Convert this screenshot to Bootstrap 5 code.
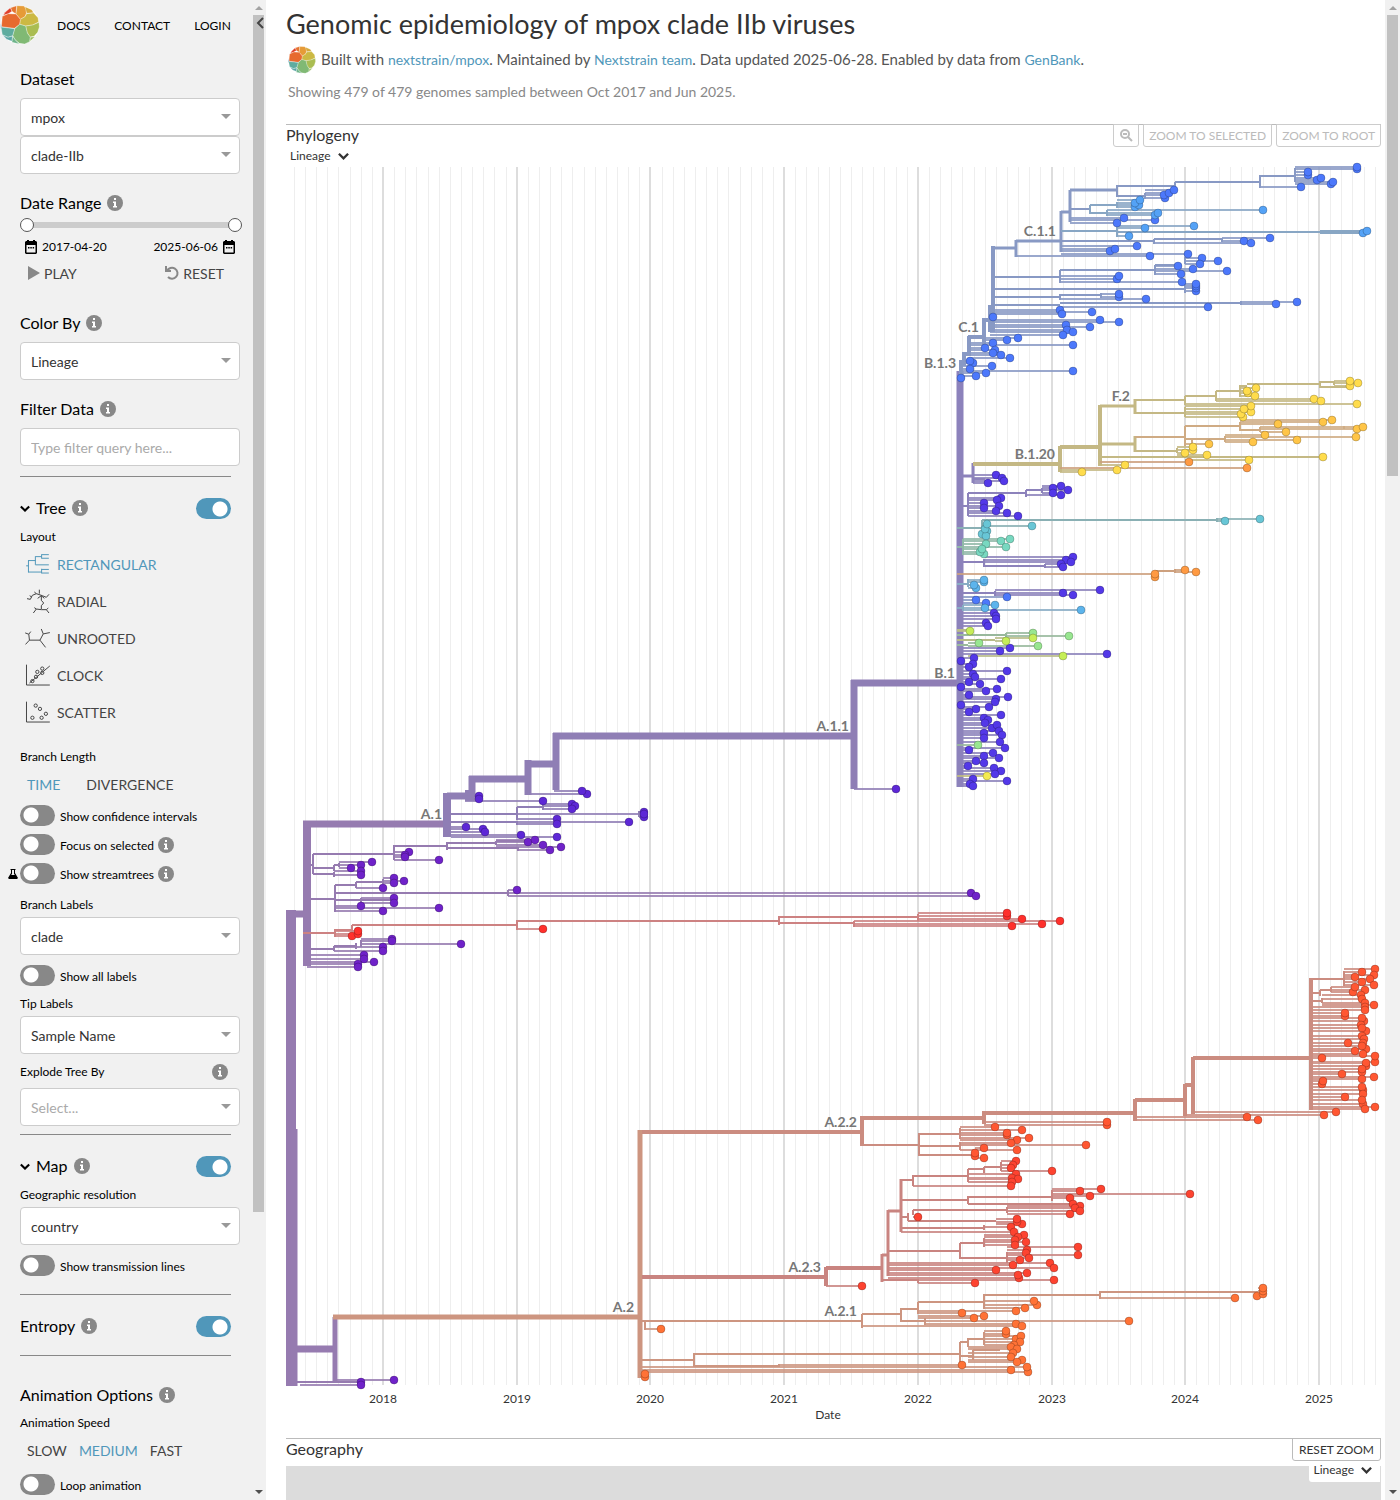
<!DOCTYPE html>
<html lang="en">
  <head>
    <meta charset="utf-8">
    <meta name="viewport" content="width=device-width, initial-scale=1">
    <title>Genomic epidemiology of mpox clade IIb viruses</title>
    <link href="https://cdn.jsdelivr.net/npm/bootstrap@5.3.3/dist/css/bootstrap.min.css" rel="stylesheet">
    <style>
      body { font-family: Lato, "Liberation Sans", sans-serif; font-size: 14px; color: #333; height: 100vh; overflow: hidden; }
      a { color: #5097ba; text-decoration: none; }
      button { background: none; border: 0; padding: 0; color: #444; }
      .side { width: 266px; background: #f1f1f1; color: #000; }
      .side-body { width: 253px; padding-left: 20px; overflow: hidden; }
      .side-body > * { width: 220px; }
      .side-body .side-nav { height: 50px; margin-left: -20px; width: 253px; font-size: 12px; gap: 24px; }
      .side-nav a { color: #000; padding-top: 2px; }
      .side-nav a:first-child { padding-top: 0; margin-right: -7px; }
      .sec { font-size: 16px; line-height: 24px; margin: 17px 0 7px; gap: 6px; }
      .sec-toggle { margin: 19px 0 0; }
      .sec-toggle .sw { margin: 0 9px 0 auto; }
      .sec-anim { margin-top: 27px; }
      .side .line { width: 211px; height: 1px; margin-top: 8px; background: #888; }
      .side .line-filter { margin-top: 10px; }
      .side .line-sw { margin-top: 14px; }
      .side .line-sec { margin-top: 17px; }
      .lbl { font-size: 12px; line-height: 18px; margin: 5px 0 3px; display: block; }
      .lbl-far { margin-top: 17px; }
      .lbl-info { margin: 9px 0 7px; padding-right: 12px; }
      .pick, .pick:focus { height: 38px; font-size: 14px; color: #333; border: 1px solid #ccc; border-radius: 4px; padding: 0 10px; background-color: #fff; box-shadow: none; }
      select.pick { background-image: url("data:image/svg+xml,%3csvg xmlns='http://www.w3.org/2000/svg' viewBox='0 0 10 5'%3e%3cpath fill='%23999' d='M0 0h10L5 5z'/%3e%3c/svg%3e"); background-size: 10px 5px; background-position: right 8px top 15px; }
      .pick::placeholder, .pick.empty { color: #aaa; }
      .info { width: 16px; height: 16px; flex: none; }
      .sw-row { height: 29px; font-size: 12px; }
      .sw-row label { margin: 2px 4px 0 5px; }
      .pick + .sw-row { margin-top: 6px; }
      .sw { appearance: none; flex: none; width: 35px; height: 21px; margin: 0; border-radius: 11px; background: radial-gradient(circle at 11px 10px, #fff 7px, #888 8px); }
      .sw:checked { background: radial-gradient(circle at 24px 11px, #fff 7px, #5097ba 8px); }
      .flask { position: absolute; left: -12px; }
      .ranges { display: grid; height: 20px; }
      .side-body .ranges { width: 222px; }
      .ranges input { grid-area: 1 / 1; appearance: none; background: none; width: 222px; height: 20px; margin: 0; pointer-events: none; }
      .ranges input:first-child { background: linear-gradient(#ccc, #ccc) center / 208px 6px no-repeat; }
      .ranges input::-webkit-slider-thumb { appearance: none; width: 14px; height: 14px; border: 1px solid #555; border-radius: 50%; background: #fff; pointer-events: auto; }
      .dates { height: 20px; margin-top: 2px; font-size: 12px; padding: 0 4px; }
      .dates button { color: #000; }
      .anim { height: 32px; margin-bottom: 22px; padding: 0 16px 0 7px; }
      .lay { height: 37px; padding-left: 5px; gap: 7px; }
      .lay svg { fill: none; stroke: currentColor; stroke-width: 3; }
      .opts { height: 24px; margin: 6px 0 5px; padding-left: 7px; gap: 26px; }
      .opts-tight { gap: 12px; }
      .on { color: #5097ba; }
      .bar { background: #f1f1f1; flex: none; }
      .bar div { background: #c1c1c1; width: 11px; }
      .bar-page { width: 15px; }
      .fold { position: absolute; left: 256px; top: 17px; line-height: 0; }
      .main { padding: 5px 4px 0 20px; overflow: hidden; min-width: 0; }
      h1 { font-size: 27px; line-height: 38px; margin: 0 0 2px; font-weight: 400; }
      .byline { height: 30px; font-size: 15px; color: #555; gap: 5px; padding-left: 2px; }
      .byline span { padding-bottom: 2px; }
      .byline a { font-size: 14px; }
      .note { line-height: 20px; margin: 7px 0 22px 2px; color: #888; }
      .pane { border-top: 1px solid #bbb; font-size: 16px; height: 23px; }
      .pane h2 { font-size: 16px; line-height: 19px; margin: 0; font-weight: 400; }
      .pane button { font-size: 12px; height: 23px; margin-top: -1px; border: 1px solid #bbb; border-radius: 0 0 3px 3px; padding: 0 6px; color: #333; }
      .pane button:disabled { color: #bbb; border-color: #ccc; padding: 0 5px; }
      .legend-btn { font-size: 12px; line-height: 18px; color: #333; padding: 0 4px; display: flex; gap: 7px; align-items: center; }
      .tree { display: block; width: 100%; overflow: visible; }
      .tree text { font-size: 12px; fill: #333; text-anchor: middle; }
      .tree .clade { font-size: 14px; font-weight: 700; fill: #777; text-anchor: end; }
      .map { height: 60px; margin-top: 5px; background: #dcdcdc; position: relative; }
      .map .legend-btn { position: absolute; right: 1px; top: 0; height: 16px; line-height: 8px; padding: 0 8px 8px 4px; background: #fff; border-radius: 0 0 0 3px; }
    </style>
  </head>
  <body class="d-flex">
    <svg width="0" height="0" class="position-absolute">
      <symbol id="logo" viewBox="0 0 120 120">
        <circle cx="60" cy="60" r="58" fill="#fff"/>
        <g stroke="#fff" stroke-width="1">
          <path fill="#e0402b" d="M15 22L31 8 36 19 25 26 10 31z"/>
          <path fill="#e5742f" d="M32 8L50 2 48 27 36 19z"/>
          <path fill="#e69b37" d="M51 2L72 3 79 12 79 25 75 35 61 43 48 27z"/>
          <path fill="#d5a83c" d="M75 5L95 14 101 23 80 25z"/>
          <path fill="#ccb943" d="M80 26L101 24 114 38 116 51 98 60 77 63 59 58 61 43 75 35z"/>
          <path fill="#e76a2f" d="M7 34L25 26 48 27 61 43 59 58 44 70 26 68 4 65z"/>
          <path fill="#4a8cb8" d="M2 54L5 66 2 72z"/>
          <path fill="#aabd52" d="M98 60L117 52 118 66 113 82 102 94 90 96 81 82 77 63z"/>
          <path fill="#80b974" d="M59 58L77 63 82 84 91 97 89 110 74 117 58 115 46 105 38 92 44 71z"/>
          <path fill="#5fac9f" d="M3 66L26 69 44 71 38 92 24 97 7 89z"/>
          <path fill="#5ba5a5" d="M8 90L24 97 38 93 36 109 20 103z"/>
          <path fill="#6db38a" d="M38 93L46 105 58 117 36 112z"/>
          <path fill="#98bc5e" d="M91 97L105 95 90 109z"/>
        </g>
      </symbol>
      <symbol id="info" viewBox="0 0 16 16">
        <circle cx="8" cy="8" r="8" fill="#888"/>
        <path fill="#fff" d="M7 3h2v2H7zM6 6.500h3V11h1v1.500H6V11h1V8H6z"/>
      </symbol>
      <symbol id="cal" viewBox="0 0 12 14">
        <path fill="currentColor" fill-rule="evenodd" d="M2 0h2v1h4V0h2v1h1l1 1v11l-1 1H1l-1-1V2l1-1h1zM1.500 5v7.500h9V5zM3 7h1.500v1.500H3zM5.300 7h1.500v1.500H5.300zM7.600 7h1.500v1.500H7.600z"/>
      </symbol>
      <symbol id="chev" viewBox="0 0 12 8">
        <path fill="none" stroke="currentColor" stroke-width="2.500" d="M1 1.500L6 6.500 11 1.500"/>
      </symbol>
    </svg>

    <aside class="side d-flex flex-shrink-0 position-relative">
      <div class="side-body">
        <nav class="side-nav d-flex align-items-center">
          <a href="#" aria-label="Home"><svg width="40" height="40"><use href="#logo"/></svg></a>
          <a href="#">DOCS</a>
          <a href="#">CONTACT</a>
          <a href="#">LOGIN</a>
        </nav>

        <label class="sec d-block" for="dataset">Dataset</label>
        <select id="dataset" class="form-select pick"><option>mpox</option></select>
        <select class="form-select pick" aria-label="Clade"><option>clade-IIb</option></select>

        <div class="sec d-flex align-items-center mb-0">Date Range <svg class="info"><use href="#info"/></svg></div>
        <div class="ranges">
          <input type="range" min="0" max="100" value="0" aria-label="Start date">
          <input type="range" min="0" max="100" value="100" aria-label="End date">
        </div>
        <div class="dates d-flex justify-content-between">
          <button type="button" class="d-flex align-items-center gap-1"><svg width="14" height="14"><use href="#cal"/></svg>2017-04-20</button>
          <button type="button" class="d-flex align-items-center gap-1">2025-06-06<svg width="14" height="14"><use href="#cal"/></svg></button>
        </div>
        <div class="anim d-flex justify-content-between">
          <button type="button" class="d-flex align-items-center gap-1"><svg width="13" height="14"><path fill="#888" d="M1 0l12 7L1 14z"/></svg>PLAY</button>
          <button type="button" class="d-flex align-items-center gap-1"><svg width="14" height="14" fill="none" stroke="#888" stroke-width="2"><path d="M1 0v5h5M2 5A5.500 5.500 0 1 1 3 11"/></svg>RESET</button>
        </div>

        <label class="sec d-flex align-items-center" for="colorby">Color By <svg class="info"><use href="#info"/></svg></label>
        <select id="colorby" class="form-select pick"><option>Lineage</option></select>
        <label class="sec d-flex align-items-center" for="filter">Filter Data <svg class="info"><use href="#info"/></svg></label>
        <input id="filter" class="form-control pick" placeholder="Type filter query here...">
        <div class="line line-filter"></div>

        <div class="sec sec-toggle d-flex align-items-center">
          <svg width="10" height="7"><use href="#chev"/></svg>
          <label for="tree-on">Tree</label> <svg class="info"><use href="#info"/></svg>
          <input id="tree-on" type="checkbox" role="switch" class="sw" checked>
        </div>
        <div class="lbl mt-2 mb-0">Layout</div>
        <button type="button" class="lay on d-flex align-items-center"><svg width="25" height="23" viewBox="0 0 75 70"><path d="M3 39H10M10 22V59M9 23H32M31 10V36M31 11H50M50 4V17M50 5H72M50 16H72M31 36H72M9 58H50M50 48V62M50 50H72M50 61H72"/></svg>RECTANGULAR</button>
        <button type="button" class="lay d-flex align-items-center"><svg width="25" height="25" viewBox="0 0 75 75"><path d="M6 29L16 31 22 19 34 14 52 20 64 25 72 16M43 14V2M20 24L14 20M34 14L28 9M49 20V34L56 42 49 50V60M38 28L49 20 58 28M25 72L34 60 49 62 64 62 72 72M34 60L28 56M64 62L70 57"/></svg>RADIAL</button>
        <button type="button" class="lay d-flex align-items-center"><svg width="25" height="23" viewBox="0 0 75 70"><path d="M13 40H45M13 40L1 53M13 40L11 22 0 18M11 22L17 14M45 40L62 62M45 40L55 21 49 6M55 21L75 17"/></svg>UNROOTED</button>
        <button type="button" class="lay d-flex align-items-center"><svg width="25" height="23" viewBox="0 0 75 70"><path d="M4 2V64H75M13 58L75 6"/><circle cx="22" cy="52" r="5"/><circle cx="33" cy="39" r="5"/><circle cx="37" cy="24" r="5"/><circle cx="52" cy="14" r="5"/><circle cx="52" cy="27" r="5"/></svg>CLOCK</button>
        <button type="button" class="lay d-flex align-items-center"><svg width="25" height="23" viewBox="0 0 75 70"><path d="M4 2V64H75"/><circle cx="32" cy="14" r="5"/><circle cx="45" cy="24" r="5"/><circle cx="63" cy="39" r="5"/><circle cx="22" cy="51" r="5"/><circle cx="50" cy="51" r="5"/></svg>SCATTER</button>

        <div class="lbl lbl-far">Branch Length</div>
        <div class="opts d-flex"><button type="button" class="on">TIME</button><button type="button">DIVERGENCE</button></div>
        <div class="sw-row d-flex align-items-center"><input id="s1" type="checkbox" role="switch" class="sw"><label for="s1">Show confidence intervals</label></div>
        <div class="sw-row d-flex align-items-center"><input id="s2" type="checkbox" role="switch" class="sw"><label for="s2">Focus on selected</label><svg class="info"><use href="#info"/></svg></div>
        <div class="sw-row d-flex align-items-center position-relative">
          <svg class="flask" width="10" height="10"><path d="M2.500 0h5v1H7v3l3 5-1 1H1L0 9l3-5V1h-.5zM4 1v4L3 6h4L6 5V1z" fill-rule="evenodd"/></svg>
          <input id="s3" type="checkbox" role="switch" class="sw"><label for="s3">Show streamtrees</label><svg class="info"><use href="#info"/></svg>
        </div>
        <label class="lbl mt-2" for="blabels">Branch Labels</label>
        <select id="blabels" class="form-select pick"><option>clade</option></select>
        <div class="sw-row d-flex align-items-center"><input id="s4" type="checkbox" role="switch" class="sw"><label for="s4">Show all labels</label></div>
        <label class="lbl" for="tlabels">Tip Labels</label>
        <select id="tlabels" class="form-select pick"><option>Sample Name</option></select>
        <label class="lbl lbl-info d-flex align-items-center justify-content-between" for="explode">Explode Tree By <svg class="info"><use href="#info"/></svg></label>
        <select id="explode" class="form-select pick empty"><option>Select...</option></select>
        <div class="line"></div>

        <div class="sec sec-toggle d-flex align-items-center">
          <svg width="10" height="7"><use href="#chev"/></svg>
          <label for="map-on">Map</label> <svg class="info"><use href="#info"/></svg>
          <input id="map-on" type="checkbox" role="switch" class="sw" checked>
        </div>
        <label class="lbl mt-2" for="geo">Geographic resolution</label>
        <select id="geo" class="form-select pick"><option>country</option></select>
        <div class="sw-row d-flex align-items-center"><input id="s5" type="checkbox" role="switch" class="sw"><label for="s5">Show transmission lines</label></div>
        <div class="line line-sw"></div>

        <div class="sec sec-toggle d-flex align-items-center">
          <label for="ent-on">Entropy</label> <svg class="info"><use href="#info"/></svg>
          <input id="ent-on" type="checkbox" role="switch" class="sw" checked>
        </div>
        <div class="line line-sec"></div>
        <div class="sec sec-anim d-flex align-items-center">Animation Options <svg class="info"><use href="#info"/></svg></div>
        <div class="lbl">Animation Speed</div>
        <div class="opts opts-tight d-flex"><button type="button">SLOW</button><button type="button" class="on">MEDIUM</button><button type="button">FAST</button></div>
        <div class="sw-row d-flex align-items-center mt-2"><input id="s6" type="checkbox" role="switch" class="sw"><label for="s6">Loop animation</label></div>
      </div>
      <div class="bar d-flex flex-column">
        <svg width="11" height="15"><path fill="#a3a3a3" d="M2 10L6 6l4 4z"/></svg>
        <div style="height: 1197px"></div>
        <svg class="mt-auto" width="11" height="15"><path fill="#505050" d="M2 5h8L6 9z"/></svg>
      </div>
      <button type="button" class="fold" aria-label="Hide sidebar"><svg width="8" height="12" fill="none" stroke="#444" stroke-width="2"><path d="M7 1L2 6l5 5"/></svg></button>
    </aside>

    <main class="main flex-grow-1">
      <h1>Genomic epidemiology of mpox clade IIb viruses</h1>
      <div class="byline d-flex align-items-center">
        <svg width="28" height="28"><use href="#logo"/></svg>
        <span>Built with <a href="#">nextstrain/mpox</a>. Maintained by <a href="#">Nextstrain team</a>. Data updated 2025-06-28. Enabled by data from <a href="#">GenBank</a>.</span>
      </div>
      <p class="note">Showing 479 of 479 genomes sampled between Oct 2017 and Jun 2025.</p>

      <section>
        <div class="pane d-flex gap-1">
          <h2 class="me-auto">Phylogeny</h2>
          <button type="button" disabled aria-label="Zoom out"><svg width="14" height="14" fill="none" stroke="#bbb" stroke-width="2"><circle cx="6" cy="5" r="4"/><path d="M9 8l4 4M4 5h4"/></svg></button>
          <button type="button" disabled>ZOOM TO SELECTED</button>
          <button type="button" disabled>ZOOM TO ROOT</button>
        </div>
        <button type="button" class="legend-btn">Lineage <svg width="11" height="8"><use href="#chev"/></svg></button>
        <svg id="tree" class="tree" viewBox="286 165 1095 1273"></svg>
      </section>

      <section>
        <div class="pane d-flex">
          <h2 class="me-auto">Geography</h2>
          <button type="button">RESET ZOOM</button>
        </div>
        <div class="map"><button type="button" class="legend-btn">Lineage <svg width="11" height="8"><use href="#chev"/></svg></button></div>
      </section>
    </main>
    <div class="bar bar-page d-flex flex-column align-items-center">
      <svg width="11" height="15"><path fill="#a3a3a3" d="M2 10L6 6l4 4z"/></svg>
      <div style="height: 461px"></div>
      <svg class="mt-auto" width="11" height="15"><path fill="#505050" d="M2 5h8L6 9z"/></svg>
    </div>

    <script>
      // line: branch colour, tip: tip colour
      // paths: [width, d], fans: [start x, "x,y ..."], each tip gets a branch from start x
      const lineages = [
        { line: "#967bb0", tip: "#6f22c9",
          paths: [
            [10, "M291 910V1386"], [8, "M307 821V966"], [7, "M287 914H307M303 824H447M291 1349H335M294 1129V1386"], [5, "M335 1317V1382"],
            [2, "M313 865H307M313 854V874M313 854H394M394 845V860M394 846H447M447 842V850M447 843H496M496 841V845M496 841H535M447 848H518M518 847V851M313 868H334M334 865V871M334 865H339M339 863V867M313 874H334M334 872V877M307 899H335M335 885V912M335 885H356M356 882V888M356 882H383M383 879V884M335 893H508M508 890V896M335 900H394M361 898V903M307 949H334M334 946V951M334 946H356M356 943V949M361 940V947M296 1382H361"]
          ],
          fans: [
            [496, "528,842 535,840 543,845 561,847"], [518, "550,850"], [394, "409,852 405,855 405,857 439,860"],
            [339, "351,868 372,862 361,865"], [334, "361,871 361,875"], [383, "394,878 404,881 394,883"], [356, "383,888"],
            [508, "517,890 971,893 976,896"], [361, "394,898 394,903"], [335, "361,906 439,908 383,911 394,1380"],
            [361, "392,939 392,941 461,944"], [334, "383,947 383,951"], [307, "364,955 364,959 374,962 358,964 358,967"], [300, "361,1382 361,1385"]
          ] },
        { line: "#8f7eb5", tip: "#5d27d6",
          paths: [
            [8, "M447 793V837M469 790V801"],
            [7, "M447 796H469M472 776V801M469 779H528M528 760V795M525 764H557M556 733V790M553 736H854M854 680V789M851 683H960"],
            [2, "M451 814H517M517 807V820M517 807H543M543 804V810M451 822H517M517 821V825M639 811V817"]
          ],
          fans: [
            [465, "479,796 479,799 543,801"], [531, "587,794"], [554, "582,791"], [543, "572,804 575,806 572,809"],
            [639, "644,812 644,817"], [517, "644,814 557,819 557,824 629,822"], [451, "466,827 483,829 485,832 521,835 557,837"], [854, "896,789"]
          ] },
        { line: "#cd8282", tip: "#ff302c",
          paths: [[2, "M303 933H335M335 929V937M335 930H352M352 925V931M352 925H517M517 920V930M517 921H779M779 916V925M779 917H918M918 914V921M779 923H854M854 921V927"]],
          fans: [[335, "352,936 358,934 358,931"], [517, "543,929"], [918, "1007,916 1007,913 1022,919"], [854, "1060,921 1042,924 1012,926"]] },
        { line: "#8c82bb", tip: "#5338e8",
          paths: [[7, "M960 371V787"], [3, "M960 476H973M973 463V483"], [2, "M973 479H985M968 506H960M968 493V516M968 493H1026M1026 490V497M1026 490H1042M1042 488V493M984 559V567M960 562H984M984 566H1045M1045 564V568M960 593H995M995 591V596"]],
          fans: [
            [973, "996,475 1002,478 1004,481 988,483"], [1042, "1053,488 1061,486 1068,490 1053,493"], [1026, "1061,495"],
            [968, "1001,498 997,500 984,503 984,508 999,506 996,511 1007,513 1018,516"], [984, "1066,560 1073,557 1071,562"], [1045, "1061,564 1063,567"],
            [995, "1100,590 1063,593 1073,595"], [963, "994,613 996,616 996,619 986,623 988,626 1010,648 1000,651 1107,654"],
            [960, "961,661 974,658 973,664 969,667 973,674 975,677 1007,671 1001,679 969,682 980,684 961,687 986,691 997,689 969,695 1008,697 996,699 995,702 961,705 989,707 976,709 969,712 1001,715 984,718 988,720 985,723 992,728 997,725 999,731 1002,735 984,733 984,738 1000,742 1005,748 969,750 993,753 984,756 999,758 976,761 984,763 968,766 994,768 1001,771 995,774 973,779 970,784 973,786 1007,781"]
          ] },
        { line: "#8899c4", tip: "#4c78fb",
          paths: [
            [4, "M961 378V360M964 366V352M963 354H969M969 336V356M968 337H984M984 318V345M983 320H990M990 305V332M993 246V332"],
            [3, "M993 248H1016M1016 240V257M1016 241H1061M1061 211V252M1061 212H1070M1070 190V222M1070 190H1117"],
            [2, "M1117 185V197M1117 186H1175M1175 182V187M1175 182H1260M1260 175V188M1260 176H1295M1295 168V182M1117 196H1145M1145 193V199M1070 209H1090M1061 241H1154M1154 239V244M1154 239H1222M1222 238V242M993 277H1060M1060 270V283M1060 270H1155M1155 265V275M1155 265H1178M1185 257V264M993 289H1185M1185 285V293M993 297H1060M1060 294V300M1060 295H1101M1101 293V298M993 305H1060M1060 303H1241M1241 301V305"]
          ],
          fans: [
            [1295, "1357,169 1357,167 1308,175 1308,172 1317,180 1321,178 1331,184 1333,182"], [1260, "1301,187"],
            [1145, "1165,198 1164,195 1169,193 1174,190"], [1070, "1155,220 1124,218 1117,223"], [1222, "1270,238 1244,241"], [1154, "1251,243"],
            [1061, "1137,246 1110,251 1115,249 1188,254"], [1016, "1150,256"], [1185, "1202,258 1218,261 1200,264 1196,291 1196,288 1196,286 1196,284"],
            [1155, "1178,266 1193,269 1181,274 1227,271"], [1060, "1182,282 1117,279 1119,276 1146,299 1208,307"], [1101, "1119,297 1119,294"],
            [1241, "1297,302 1276,304"], [993, "1060,310 1062,314 1092,312 993,317 1100,320 1119,322"], [990, "1066,325 1090,327 1067,330 1073,332 1063,335"],
            [984, "1018,338 1007,340"], [969, "993,343 985,348 995,350 993,353 1001,355 1010,358 1073,345"],
            [963, "973,363 970,361 970,369 992,366 1073,371 986,373 976,376 961,378 1007,597 976,600 986,603"]
          ] },
        { line: "#88a6c4", tip: "#54a2f6",
          paths: [[2, "M1090 205V214M1090 205H1117M1117 202V208M1090 213H1107M1107 210V216M1061 231H1117M1117 226V237M1117 232H1320"], [4, "M1320 232H1363"]],
          fans: [[1117, "1135,207 1139,205 1135,203 1140,200 1194,226 1145,228 1129,236"], [1107, "1155,215 1158,213 1263,210"], [1320, "1363,233 1367,231"]] },
        { line: "#c4b884", tip: "#ffdc4c",
          paths: [
            [4, "M973 464H1060M1060 446V472M1060 447H1100M1100 405V466"],
            [3, "M1100 406H1135M1135 399V414M1100 444H1135M1135 436V452"],
            [2, "M1135 400H1185M1185 396V405M1185 396H1216M1216 391V401M1216 391H1240M1240 385V397M1240 386H1247M1247 384H1320M1320 381V388M1320 382H1334M1334 381V385M1320 387H1350M1135 413H1185M1185 407V417M1135 451H1177M1177 448V453M1100 457H1323"]
          ],
          fans: [
            [1334, "1350,386 1350,381 1358,383"], [1240, "1248,393 1247,391 1256,388 1255,396"], [1216, "1314,399 1321,401"], [1185, "1357,404 1251,412 1251,406 1243,417 1241,414 1244,409 1249,460"],
            [1177, "1193,450 1193,447 1185,453 1207,455"], [1100, "1323,457 1125,465"], [1060, "1117,470 1082,472"]
          ] },
        { line: "#cfab84", tip: "#ffc547",
          paths: [[2, "M1135 437H1185M1185 426V446M1185 426H1240M1240 422V431M1240 430H1260M1260 427V432M1344 426V429M1185 439H1225M1225 436V442M1192 438V446"]],
          fans: [[1240, "1278,424 1323,422 1332,420"], [1260, "1357,429 1363,427 1286,432"], [1225, "1356,437 1265,435 1297,440 1253,442"], [1185, "1209,444"]] },
        { line: "#cda07e", tip: "#ff9a42",
          paths: [[2, "M1155 571H1175M1175 569V573"]],
          fans: [[1100, "1189,462"], [1060, "1247,468"], [1155, "1155,577"], [957, "1155,574"], [1175, "1185,570 1196,572"]] },
        { line: "#8ab0b4", tip: "#68c6d6",
          paths: [[2, "M957 528H982M982 520V529M982 520H1217M1217 518V522"]],
          fans: [[1217, "1225,521 1260,519"], [982, "1032,526 987,531 982,534 986,536 985,529 987,524"]] },
        { line: "#90b8a8", tip: "#78d8c0",
          paths: [[2, "M957 547H963M963 539V555"]],
          fans: [[963, "1010,539 1001,541 1006,547 986,544 984,554 980,552 982,549"]] },
        { line: "#88acc4", tip: "#5cb4ec",
          paths: [[2, "M957 584H968M968 579V587M957 608H963M963 605V611"]],
          fans: [[968, "984,582 984,580 976,588 974,585"], [963, "995,605 985,608 1081,610"]] },
        { line: "#98b89c", tip: "#98e690",
          paths: [[2, "M957 635H1006M1006 633V637M957 645H968"]],
          fans: [[1006, "1033,633 1069,636"], [968, "979,643 1038,646"], [957, "978,745"]] },
        { line: "#b8bc88", tip: "#c6ee58",
          paths: [[2, "M957 640H995M957 630H970"]],
          fans: [[995, "1033,638 1006,641"], [957, "970,631"], [968, "1063,656"]] },
        { line: "#c0bc80", tip: "#f4ea50", paths: [], fans: [[957, "987,776"]] },
        { line: "#cd9580", tip: "#ff7236",
          paths: [
            [5, "M333 1317H640M640 1130V1378"],
            [2, "M640 1321H862M645 1321V1330M862 1314V1328M862 1314H901M901 1308V1322M901 1309H918M918 1302V1314M918 1302H984M984 1294V1309M984 1295H1100M1100 1291V1299M1100 1292H1258M901 1321H925M925 1318V1325M640 1360H694M694 1353V1367M694 1354H960M960 1342V1365M960 1342H968M968 1338V1347M984 1332V1345M968 1339H984M960 1356H973M973 1350V1360M973 1350H1000M694 1366H779M779 1364V1367"]
          ],
          fans: [
            [645, "661,1329"], [1258, "1257,1296 1263,1294 1263,1291 1263,1288"], [1100, "1235,1298"], [984, "1037,1305 1034,1301 1025,1308"], [918, "1016,1311 962,1313 984,1316 974,1318"],
            [925, "1129,1321 1016,1324"], [862, "1022,1326"], [984, "1006,1334 1006,1331 1016,1339 1021,1336 1020,1342 1014,1345"],
            [968, "1011,1347 1017,1349 1013,1353 1011,1357 1022,1360 1017,1362"], [779, "962,1365"], [640, "1028,1372 1027,1367 1011,1370 645,1377 645,1374"]
          ] },
        { line: "#cb8c80", tip: "#ff5732",
          paths: [
            [4, "M642 1132H862M862 1116V1146M862 1118H984M984 1111V1124M984 1113H1135M1135 1099V1121M1135 1100H1185M1185 1084V1116M1185 1085H1193M1193 1057V1114M1193 1058H1311M1311 978V1110"],
            [2, "M862 1145H919M919 1133V1156M919 1134H960M960 1128V1139M919 1146H960M960 1142V1150M919 1155H975M1311 979H1344M1344 971V986M1311 993H1320M1320 990V996M1320 990H1331M1331 987V992M1311 1001H1322M1322 998V1003"]
          ],
          fans: [
            [984, "1107,1125 1107,1122"], [1193, "1336,1112"], [1185, "1324,1115"], [1135, "1247,1117 1258,1120"],
            [960, "995,1127 1022,1130 1007,1135 1007,1133 1029,1138 1017,1140 1011,1143 1086,1145 1017,1150"], [975, "984,1148 975,1156 975,1153 984,1158"],
            [1344, "1375,969 1362,972 1374,975 1355,977 1370,979 1362,982 1374,985"], [1331, "1353,992 1355,987 1365,990"], [1322, "1361,995 1362,999 1365,1003 1374,1005"],
            [1311, "1365,1007 1365,1010 1345,1016 1345,1013 1364,1021 1362,1018 1361,1025 1366,1031 1362,1028 1362,1036 1364,1039 1363,1043 1348,1043 1366,1049 1362,1046 1355,1051 1363,1054 1375,1062 1375,1056 1322,1058 1366,1066 1366,1063 1362,1072 1362,1069 1342,1074 1374,1077 1362,1079 1322,1084 1323,1081 1363,1090 1362,1087 1363,1094 1345,1097 1363,1104 1362,1100 1375,1107 1365,1109"]
          ] },
        { line: "#c98480", tip: "#fd4330",
          paths: [
            [4, "M642 1277H826M826 1267V1286M826 1268H882"],
            [3, "M882 1254V1282M882 1255H888M888 1210V1276M888 1211H901M901 1179V1232"],
            [2, "M901 1180H913M913 1175V1186M913 1176H968M968 1169V1182M968 1169H984M984 1167V1173M984 1167H1001M1001 1162V1171M901 1200H968M968 1196V1204M968 1197H1052M968 1204H1070M1052 1190V1201M901 1217H908M908 1213V1221M913 1210V1215M913 1210H1007M1007 1207V1213M908 1221H996M901 1228H984M984 1225V1230M888 1251H960M960 1243V1259M960 1243H984M984 1238V1247M960 1258H1007M1007 1252V1263M882 1280H918M918 1279V1283"]
          ],
          fans: [
            [826, "862,1286"], [1001, "1016,1161 1013,1165 1011,1168 1052,1171"], [968, "1016,1174 1012,1178 1018,1179 1012,1182"], [913, "1011,1186 918,1217"],
            [1052, "1080,1191 1101,1189 1090,1196 1190,1194 1070,1198"], [1007, "1073,1204 1080,1206 1075,1208 1080,1211 1070,1214"], [996, "1022,1224 1017,1222 1017,1219"], [984, "1011,1227"], [901, "1014,1232"],
            [984, "1024,1235 1018,1237 1015,1240 1015,1245 1026,1242"], [1007, "1078,1247 1027,1250 1026,1253 1078,1255 1029,1258 1020,1260"],
            [888, "1013,1265 1050,1263 1054,1268 996,1270 1027,1273 1019,1278 1018,1275"], [918, "1054,1280 975,1283"]
          ] }
      ];

      const cladeLabels = [
        ["C.1.1", 1056, 236], ["C.1", 979, 332], ["B.1.3", 956, 368], ["F.2", 1130, 401], ["B.1.20", 1055, 459], ["B.1", 955, 678],
        ["A.1.1", 849, 731], ["A.1", 442, 819], ["A.2.2", 857, 1127], ["A.2.3", 821, 1272], ["A.2.1", 857, 1316], ["A.2", 634, 1312]
      ];

      function drawGrid() {
        let minor = "";
        let major = "";
        let html = "";
        for (let m = -8; m <= 89; m++) {
          const x = Math.round(383 + (m * 936) / 84);
          if (m % 12 === 0) {
            major += `M${x} 167V1385`;
            html += `<text x="${x}" y="1403">${2018 + m / 12}</text>`;
          } else {
            minor += `M${x}.5 167V1385`;
          }
        }
        return `<path d="${minor}" stroke="#eee"/><path d="${major}" stroke="#ddd" stroke-width="2"/>${html}<text x="828" y="1419">Date</text>`;
      }

      function drawTree() {
        let branches = "";
        let tips = "";
        lineages.forEach((l) => {
          l.paths.forEach(([w, d]) => {
            branches += `<path d="${d}" stroke="${l.line}" stroke-width="${w}" fill="none"/>`;
          });
          let d = "";
          l.fans.forEach(([x0, list]) => {
            list.split(" ").forEach((p) => {
              const [x, y] = p.split(",");
              d += `M${x0} ${y}H${x}`;
              tips += `<circle cx="${x}" cy="${y}" r="4" fill="${l.tip}" stroke="#000" stroke-opacity=".2"/>`;
            });
          });
          branches += `<path d="${d}" stroke="${l.line}" stroke-width="2" stroke-opacity=".85"/>`;
        });
        const labels = cladeLabels.map(([t, x, y]) => `<text class="clade" x="${x}" y="${y}">${t}</text>`).join("");
        document.querySelector("#tree").innerHTML = drawGrid() + branches + tips + labels;
      }

      drawTree();
    </script>
    <script src="https://cdn.jsdelivr.net/npm/bootstrap@5.3.3/dist/js/bootstrap.bundle.min.js"></script>
  </body>
</html>
